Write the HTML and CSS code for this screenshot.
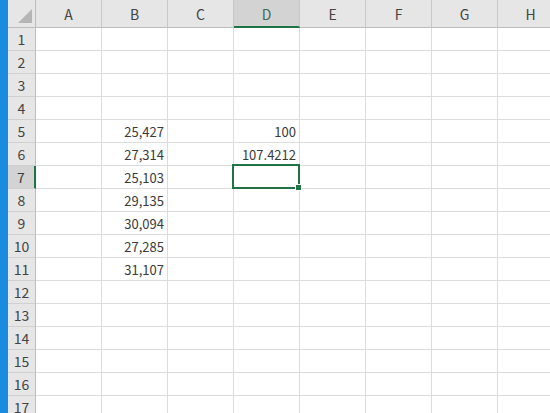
FILE: index.html
```html
<!DOCTYPE html>
<html>
<head>
<meta charset="utf-8">
<link rel="stylesheet" href="styles.css">
</head>
<body>
<div class="app">
  <div class="strip"></div>
  <div class="sheet">
    <div class="corner"><svg width="16" height="16" viewBox="0 0 16 16"><polygon points="15,1 15,15 1,15" fill="#b5b5b5"/></svg></div>
    <div class="ch">A</div><div class="ch">B</div><div class="ch">C</div><div class="ch sel">D</div><div class="ch">E</div><div class="ch">F</div><div class="ch">G</div><div class="ch">H</div>

    <div class="rh">1</div><div class="c"></div><div class="c"></div><div class="c"></div><div class="c"></div><div class="c"></div><div class="c"></div><div class="c"></div><div class="c"></div>
    <div class="rh">2</div><div class="c"></div><div class="c"></div><div class="c"></div><div class="c"></div><div class="c"></div><div class="c"></div><div class="c"></div><div class="c"></div>
    <div class="rh">3</div><div class="c"></div><div class="c"></div><div class="c"></div><div class="c"></div><div class="c"></div><div class="c"></div><div class="c"></div><div class="c"></div>
    <div class="rh">4</div><div class="c"></div><div class="c"></div><div class="c"></div><div class="c"></div><div class="c"></div><div class="c"></div><div class="c"></div><div class="c"></div>
    <div class="rh">5</div><div class="c"></div><div class="c num">25,427</div><div class="c"></div><div class="c num">100</div><div class="c"></div><div class="c"></div><div class="c"></div><div class="c"></div>
    <div class="rh">6</div><div class="c"></div><div class="c num">27,314</div><div class="c"></div><div class="c num">107.4212</div><div class="c"></div><div class="c"></div><div class="c"></div><div class="c"></div>
    <div class="rh sel">7</div><div class="c"></div><div class="c num">25,103</div><div class="c"></div><div class="c active"></div><div class="c"></div><div class="c"></div><div class="c"></div><div class="c"></div>
    <div class="rh">8</div><div class="c"></div><div class="c num">29,135</div><div class="c"></div><div class="c"></div><div class="c"></div><div class="c"></div><div class="c"></div><div class="c"></div>
    <div class="rh">9</div><div class="c"></div><div class="c num">30,094</div><div class="c"></div><div class="c"></div><div class="c"></div><div class="c"></div><div class="c"></div><div class="c"></div>
    <div class="rh">10</div><div class="c"></div><div class="c num">27,285</div><div class="c"></div><div class="c"></div><div class="c"></div><div class="c"></div><div class="c"></div><div class="c"></div>
    <div class="rh">11</div><div class="c"></div><div class="c num">31,107</div><div class="c"></div><div class="c"></div><div class="c"></div><div class="c"></div><div class="c"></div><div class="c"></div>
    <div class="rh">12</div><div class="c"></div><div class="c"></div><div class="c"></div><div class="c"></div><div class="c"></div><div class="c"></div><div class="c"></div><div class="c"></div>
    <div class="rh">13</div><div class="c"></div><div class="c"></div><div class="c"></div><div class="c"></div><div class="c"></div><div class="c"></div><div class="c"></div><div class="c"></div>
    <div class="rh">14</div><div class="c"></div><div class="c"></div><div class="c"></div><div class="c"></div><div class="c"></div><div class="c"></div><div class="c"></div><div class="c"></div>
    <div class="rh">15</div><div class="c"></div><div class="c"></div><div class="c"></div><div class="c"></div><div class="c"></div><div class="c"></div><div class="c"></div><div class="c"></div>
    <div class="rh">16</div><div class="c"></div><div class="c"></div><div class="c"></div><div class="c"></div><div class="c"></div><div class="c"></div><div class="c"></div><div class="c"></div>
    <div class="rh">17</div><div class="c"></div><div class="c"></div><div class="c"></div><div class="c"></div><div class="c"></div><div class="c"></div><div class="c"></div><div class="c"></div>
  </div>
</div>
</body>
</html>
```
FILE: styles.css
```css
html, body {
  margin: 0;
  padding: 0;
  width: 550px;
  height: 413px;
  overflow: hidden;
  background: #fff;
}
.app {
  display: flex;
  height: 413px;
  overflow: hidden;
  font-family: "Noto Sans CJK JP", "Liberation Sans", sans-serif;
  font-size: 13px;
  color: #3a3a3a;
}
.strip {
  width: 8px;
  flex: none;
  background: #1a8ce0;
}
.sheet {
  display: grid;
  grid-template-columns: 28px repeat(8, 66px);
  grid-template-rows: 28px;
  grid-auto-rows: 23px;
  flex: none;
}
.sheet > div {
  box-sizing: border-box;
}
.corner {
  background: #e6e6e6;
  border-right: 1px solid #bdbdbd;
  border-bottom: 1px solid #bdbdbd;
  display: flex;
  align-items: flex-end;
  justify-content: flex-end;
  padding: 0 2px 3px 0;
}
.corner svg { display: block; }
.ch {
  background: #e6e6e6;
  border-right: 1px solid #c8c8c8;
  border-bottom: 1px solid #bdbdbd;
  display: flex;
  align-items: center;
  justify-content: center;
  color: #444;
  font-size: 14px;
  padding-top: 1px;
}
.ch.sel {
  background: #d3d3d3;
  border-bottom: 2px solid #217346;
  color: #3c6e55;
}
.rh {
  background: #e6e6e6;
  border-right: 1px solid #bdbdbd;
  border-bottom: 1px solid #d0d0d0;
  display: flex;
  align-items: center;
  justify-content: center;
  color: #444;
  font-size: 14px;
}
.rh.sel {
  background: #d3d3d3;
  border-right: 2px solid #217346;
  color: #3c3c3c;
}
.c {
  border-right: 1px solid #dcdcdc;
  border-bottom: 1px solid #dcdcdc;
}
.num {
  display: flex;
  align-items: center;
  justify-content: flex-end;
  padding-right: 3px;
}
.active {
  position: relative;
}
.active::after {
  content: "";
  position: absolute;
  left: -2px;
  top: -2px;
  right: -1px;
  bottom: -1px;
  border: 2px solid #217346;
}
.active::before {
  content: "";
  position: absolute;
  right: -3px;
  bottom: -3px;
  width: 5px;
  height: 5px;
  background: #217346;
  border: 1px solid #fff;
  z-index: 2;
}
```
